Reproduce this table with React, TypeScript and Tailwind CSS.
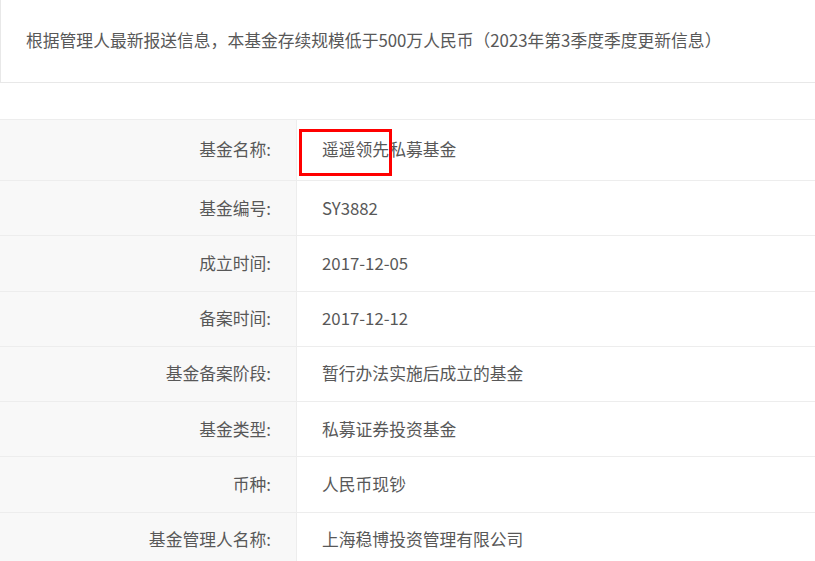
import React from 'react';

const rows: [string, string][] = [
  ['基金名称:', '遥遥领先私募基金'],
  ['基金编号:', 'SY3882'],
  ['成立时间:', '2017-12-05'],
  ['备案时间:', '2017-12-12'],
  ['基金备案阶段:', '暂行办法实施后成立的基金'],
  ['基金类型:', '私募证券投资基金'],
  ['币种:', '人民币现钞'],
  ['基金管理人名称:', '上海稳博投资管理有限公司'],
];

export default function App() {
  return (
    <div className="w-[815px] h-[561px] overflow-hidden bg-white text-[16.8px] text-[#585858]" style={{ fontFamily: '"Microsoft YaHei", "Noto Sans CJK SC", sans-serif' }}>
      {/* Notice */}
      <div className="h-[83px] w-[830px] border-l border-b border-[#e8e8e8] flex items-center pl-[25px]">
        根据管理人最新报送信息，本基金存续规模低于500万人民币（2023年第3季度季度更新信息）
      </div>

      {/* Detail table */}
      <div className="mt-[36px] w-[830px] border-t border-[#ededed]">
        {rows.map(([label, value], i) => (
          <div key={label} className={`flex border-b border-[#ededed] ${i === 0 ? 'h-[61px]' : 'h-[55.3px]'}`}>
            <div className="w-[297px] shrink-0 bg-[#f8f8f8] border-r border-[#ededed] flex items-center justify-end pr-[25px]">
              {label}
            </div>
            <div className="relative flex-1 flex items-center pl-[25px]">
              {value}
              {i === 0 && (
                <div className="absolute left-[2px] top-[9px] w-[93px] h-[47px] border-[3px] border-[#f00]" />
              )}
            </div>
          </div>
        ))}
      </div>
    </div>
  );
}
